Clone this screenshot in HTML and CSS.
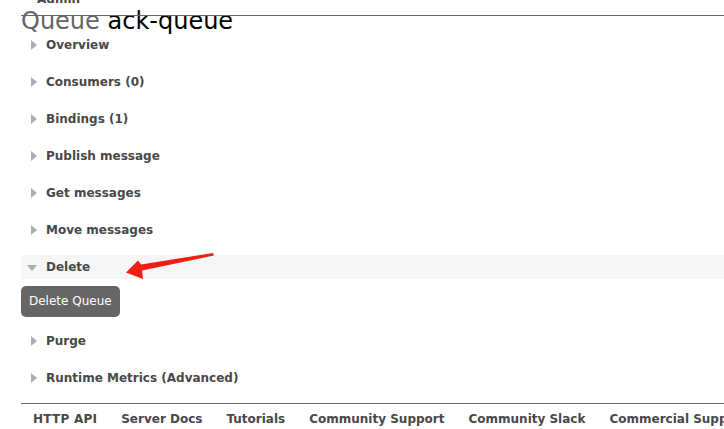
FILE: index.html
```html
<!DOCTYPE html>
<html>
<head>
<meta charset="utf-8">
<link rel="stylesheet" href="styles.css">
</head>
<body>
<div class="page">
  <div class="topbar"><span class="admin">Admin</span></div>
  <h1 class="title"><span class="kind">Queue</span> ack-queue</h1>
  <div class="sections">
    <div class="section"><div class="head"><span class="tri-r"></span>Overview</div></div>
    <div class="section"><div class="head"><span class="tri-r"></span>Consumers (0)</div></div>
    <div class="section"><div class="head"><span class="tri-r"></span>Bindings (1)</div></div>
    <div class="section"><div class="head"><span class="tri-r"></span>Publish message</div></div>
    <div class="section"><div class="head"><span class="tri-r"></span>Get messages</div></div>
    <div class="section"><div class="head"><span class="tri-r"></span>Move messages</div></div>
    <div class="section open">
      <div class="head"><span class="tri-d"></span>Delete</div>
      <div class="body"><button class="btn">Delete Queue</button></div>
    </div>
    <div class="section"><div class="head"><span class="tri-r"></span>Purge</div></div>
    <div class="section"><div class="head"><span class="tri-r"></span>Runtime Metrics (Advanced)</div></div>
  </div>
  <div class="footer">
    <a>HTTP API</a>
    <a>Server Docs</a>
    <a>Tutorials</a>
    <a>Community Support</a>
    <a>Community Slack</a>
    <a>Commercial Support</a>
    <a>Plugins</a>
  </div>
</div>
<svg class="arrow" width="724" height="429" viewBox="0 0 724 429">
  <polygon points="213,253 141,264.5 138,260.5 126,272.5 143,279 142,270.5 214,255.5" fill="#f01d12"/>
</svg>
</body>
</html>
```
FILE: styles.css
```css
html, body {
  margin: 0;
  padding: 0;
  background: #fff;
  overflow: hidden;
}
body {
  font-family: "DejaVu Sans", Verdana, sans-serif;
  font-size: 12px;
  color: #484848;
  width: 724px;
  height: 429px;
  position: relative;
}
.page {
  margin-left: 21px;
}
.topbar {
  display: flow-root;
  height: 15px;
  border-bottom: 1px solid #666;
  position: relative;
  z-index: 1;
}
.admin {
  display: block;
  padding-left: 16px;
  font-weight: bold;
  line-height: 12px;
  margin-top: -7px;
  color: #484848;
}
.title {
  margin: -7px 0 0 0;
  font-size: 24px;
  line-height: 24px;
  font-weight: normal;
  color: #000;
  white-space: nowrap;
}
.title .kind {
  color: #666;
}
.section {
  margin-bottom: 13px;
}
.head {
  height: 24px;
  display: flex;
  align-items: center;
  padding-left: 10px;
  font-weight: bold;
  white-space: nowrap;
}
.tri-r {
  width: 0;
  height: 0;
  border-left: 6px solid #adadad;
  border-top: 5px solid transparent;
  border-bottom: 5px solid transparent;
  margin-right: 9px;
}
.open .head {
  background: #f6f6f6;
  padding-left: 6px;
}
.tri-d {
  width: 0;
  height: 0;
  border-top: 6px solid #adadad;
  border-left: 5px solid transparent;
  border-right: 5px solid transparent;
  margin-right: 9px;
  margin-top: 1px;
}
.open .body {
  padding-top: 7px;
  margin-bottom: -1px;
}
.btn {
  display: block;
  height: 31px;
  padding: 0 8px;
  border: 0;
  border-radius: 5px;
  background: #666;
  color: #fff;
  font-family: "DejaVu Sans", Verdana, sans-serif;
  font-size: 12px;
  letter-spacing: 0;
  line-height: 31px;
  cursor: pointer;
}
.footer {
  margin-top: 1px;
  border-top: 1px solid #666;
  padding: 8px 0 0 12px;
  display: flex;
  gap: 24px;
  white-space: nowrap;
  overflow: hidden;
  line-height: 14px;
  font-weight: bold;
}
.footer a {
  color: #484848;
  flex: none;
}
.footer a:first-child {
  letter-spacing: 0.25px;
}
.arrow {
  position: absolute;
  left: 0;
  top: 0;
  pointer-events: none;
}
```
